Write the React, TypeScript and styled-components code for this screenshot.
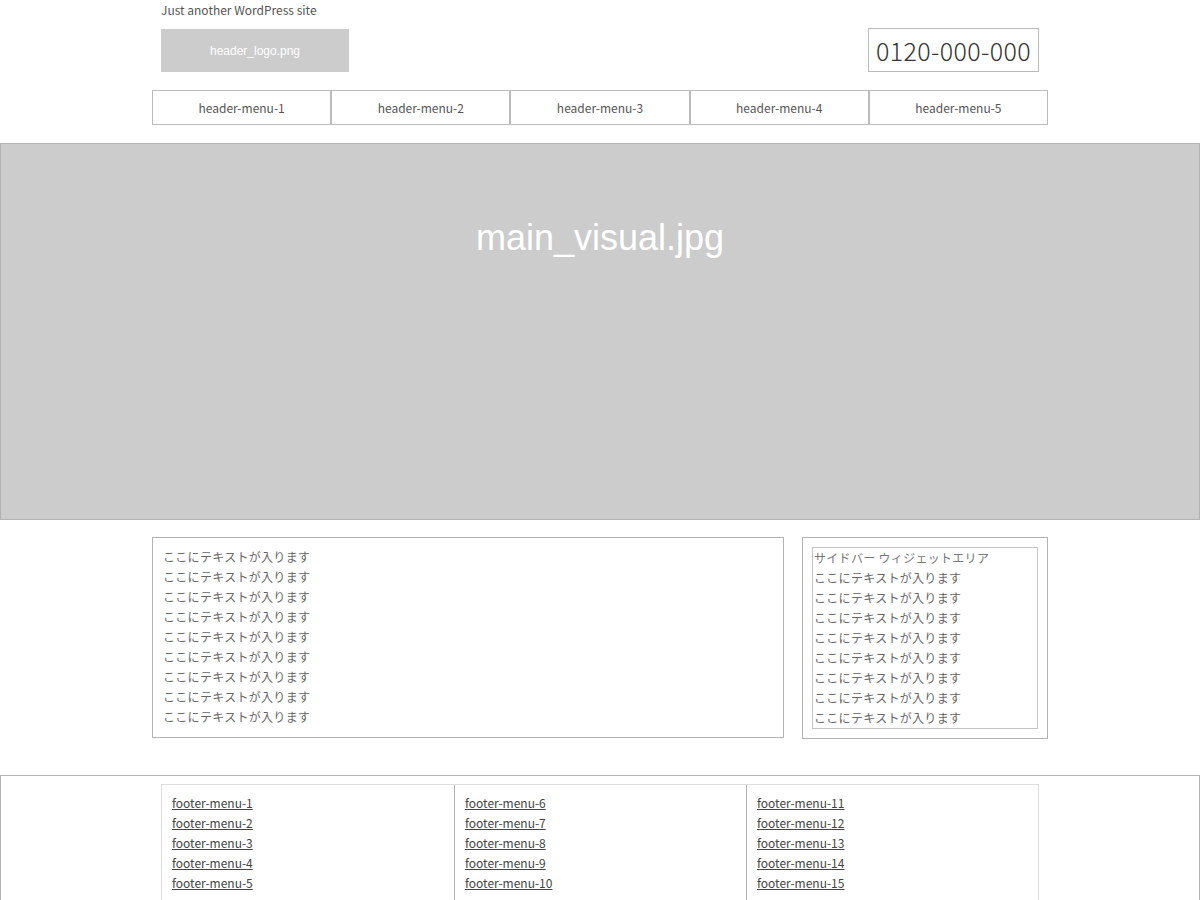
import styled, { createGlobalStyle } from 'styled-components';

const GlobalStyle = createGlobalStyle`
  html, body {
    margin: 0;
    padding: 0;
    background: #fff;
  }
  body {
    font-family: "Noto Sans CJK JP", "Noto Sans", sans-serif;
    font-size: 12px;
    color: #666;
  }
`;

const headerMenus = [1, 2, 3, 4, 5].map(n => `header-menu-${n}`);
const footerColumns = [
  [1, 2, 3, 4, 5],
  [6, 7, 8, 9, 10],
  [11, 12, 13, 14, 15],
];
const mainLines = Array.from({ length: 9 }, () => 'ここにテキストが入ります');
const sideLines = Array.from({ length: 8 }, () => 'ここにテキストが入ります');

export default function App() {
  return (
    <>
      <GlobalStyle />
      <Header>
        <HeaderTop>
          <Tagline>Just another WordPress site</Tagline>
          <LogoRow>
            <Logo>header_logo.png</Logo>
            <Phone>0120-000-000</Phone>
          </LogoRow>
        </HeaderTop>
        <Nav>
          {headerMenus.map(label => (
            <NavItem key={label}>{label}</NavItem>
          ))}
        </Nav>
      </Header>

      <MainVisual>
        <VisualLabel>main_visual.jpg</VisualLabel>
      </MainVisual>

      <Content>
        <MainBox>
          {mainLines.map((line, i) => (
            <Line key={`main-${i}`}>{line}</Line>
          ))}
        </MainBox>
        <Sidebar>
          <Widget>
            <WidgetTitle>サイドバー ウィジェットエリア</WidgetTitle>
            {sideLines.map((line, i) => (
              <Line key={`side-${i}`}>{line}</Line>
            ))}
          </Widget>
        </Sidebar>
      </Content>

      <Footer>
        <FooterInner>
          {footerColumns.map((col, ci) => (
            <FooterColumn key={`col-${ci}`}>
              {col.map(n => (
                <FooterLink key={n} href="#">
                  footer-menu-{n}
                </FooterLink>
              ))}
            </FooterColumn>
          ))}
        </FooterInner>
      </Footer>
    </>
  );
}

const Header = styled.header`
  width: 896px;
  margin: 0 auto;
`;

const HeaderTop = styled.div`
  padding: 0 9px;
`;

const Tagline = styled.p`
  margin: 0;
  height: 20px;
  line-height: 20px;
  font-size: 12px;
  color: #555;
`;

const LogoRow = styled.div`
  display: flex;
  justify-content: space-between;
  align-items: flex-end;
  margin-top: 8px;
`;

const Logo = styled.div`
  width: 188px;
  height: 43px;
  background: #ccc;
  color: #fff;
  font-family: "Liberation Sans", Arial, sans-serif;
  font-size: 12px;
  display: flex;
  align-items: center;
  justify-content: center;
`;

const Phone = styled.div`
  width: 169px;
  height: 42px;
  border: 1px solid #bbb;
  display: flex;
  align-items: center;
  justify-content: center;
  font-size: 25px;
  font-weight: 300;
  color: #333;
  letter-spacing: 0.4px;
`;

const Nav = styled.nav`
  display: grid;
  grid-template-columns: repeat(5, 1fr);
  margin-top: 18px;
`;

const NavItem = styled.div`
  height: 33px;
  border: 1px solid #bbb;
  display: flex;
  align-items: center;
  justify-content: center;
  font-size: 12px;
  color: #555;
`;

const MainVisual = styled.div`
  margin-top: 18px;
  height: 375px;
  border: 1px solid #b3b3b3;
  background: #ccc;
  display: flex;
  justify-content: center;
`;

const VisualLabel = styled.div`
  margin-top: 73px;
  color: #fff;
  font-family: "Liberation Sans", Arial, sans-serif;
  font-size: 36px;
  line-height: 42px;
  height: 42px;
`;

const Content = styled.div`
  width: 896px;
  margin: 17px auto 0;
  display: flex;
  align-items: flex-start;
  gap: 18px;
`;

const MainBox = styled.div`
  width: 610px;
  height: 181px;
  padding: 9px 10px;
  border: 1px solid #b3b3b3;
`;

const Line = styled.div`
  line-height: 20px;
  height: 20px;
  letter-spacing: 0.3px;
`;

const Sidebar = styled.aside`
  width: 226px;
  padding: 9px;
  border: 1px solid #b3b3b3;
`;

const Widget = styled.div`
  border: 1px solid #c4c4c4;
  padding: 0 0 0 1px;
`;

const WidgetTitle = styled(Line)`
  color: #777;
`;

const Footer = styled.footer`
  margin-top: 36px;
  border: 1px solid #b3b3b3;
  border-bottom: none;
  padding-top: 8px;
`;

const FooterInner = styled.div`
  width: 876px;
  margin: 0 auto;
  display: grid;
  grid-template-columns: repeat(3, 1fr);
  border: 1px solid #ddd;
  border-bottom: none;
`;

const FooterColumn = styled.div`
  display: flex;
  flex-direction: column;
  padding: 8px 10px;
  border-left: 1px solid #b3b3b3;

  &:first-child {
    border-left: none;
  }
`;

const FooterLink = styled.a`
  line-height: 20px;
  height: 20px;
  color: #444;
  font-size: 12px;
  text-decoration: underline;
`;
